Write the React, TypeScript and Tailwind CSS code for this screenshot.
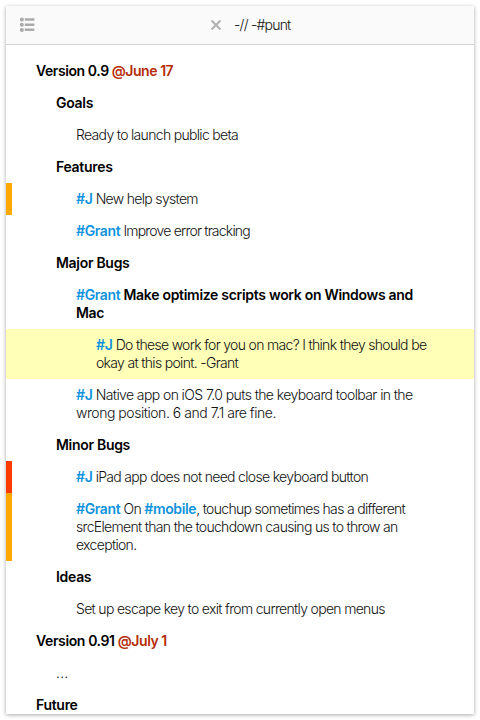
import type { ReactNode } from "react";

function Tag({ children }: { children: ReactNode }) {
  return <span className="font-['Inter'] font-semibold tracking-[-0.37px] text-[#0f93dd]">{children}</span>;
}

function When({ children }: { children: ReactNode }) {
  return <span className="tracking-[-0.45px] text-[#b52c05]">{children}</span>;
}

function Row({ className, children }: { className: string; children: ReactNode }) {
  return <li className={`border-l-6 py-[7px] ${className}`}>{children}</li>;
}

const heading = "font-semibold tracking-[-0.3px] text-black";
const plain = "border-transparent";

export default function App() {
  return (
    <div className="h-[720px] w-[480px] overflow-hidden bg-white p-[6px] font-['Inter','Liberation_Sans',sans-serif] text-[14px] leading-[18px] font-light tracking-[-0.68px] whitespace-nowrap text-[#111]">
      <div className="h-[708px] overflow-hidden bg-white shadow-[0_1px_4px_rgba(0,0,0,0.35)]">
        <header className="flex h-[39px] items-center border-b border-[#d2d2d2] bg-[#fafafa]">
          <svg className="ml-[14px] h-[16px] w-[15px] fill-[#aaa]" viewBox="0 0 15 16">
            <circle cx="1.9" cy="2.5" r="2" />
            <circle cx="1.9" cy="7.7" r="2" />
            <circle cx="1.9" cy="12.9" r="2" />
            <path d="M4.8 1.2h9.6v2.5H4.8zM4.8 6.4h9.6v2.5H4.8zM4.8 11.6h9.6v2.5H4.8z" />
          </svg>
          <svg className="ml-[176px] h-[10px] w-[10px] stroke-[#b4b4b4]" viewBox="0 0 10 10" strokeWidth="2.2">
            <path d="M.5.5l9 9M9.5.5l-9 9" />
          </svg>
          <span className="ml-[13px] tracking-[-0.78px]">-// -#punt</span>
        </header>
        <ul className="pt-[10px]">
          <Row className={`${plain} pl-[24px] ${heading}`}><span className="tracking-[-0.42px]">Version 0.9 </span><When>@June 17</When></Row>
          <Row className={`${plain} pl-[44px] ${heading}`}>Goals</Row>
          <Row className={`${plain} pl-[64px]`}>Ready to launch public beta</Row>
          <Row className={`${plain} pl-[44px] ${heading}`}>Features</Row>
          <Row className="border-[#ffa800] pl-[64px]"><Tag>#J</Tag> New help system</Row>
          <Row className={`${plain} pl-[64px] tracking-[-0.8px]`}><Tag>#Grant</Tag> Improve error tracking</Row>
          <Row className={`${plain} pl-[44px] ${heading}`}>Major Bugs</Row>
          <Row className={`${plain} pl-[64px] ${heading}`}><Tag>#Grant</Tag> Make optimize scripts work on Windows and<br />Mac</Row>
          <Row className="border-[#ffffb8] bg-[#ffffb8] pl-[84px]"><Tag>#J</Tag> Do these work for you on mac? I think they should be<br />okay at this point. -Grant</Row>
          <Row className={`${plain} pl-[64px] tracking-[-0.6px]`}><Tag>#J</Tag> Native app on iOS 7.0 puts the keyboard toolbar in the<br /><span className="tracking-[-0.46px]">wrong position. 6 and 7.1 are fine.</span></Row>
          <Row className={`${plain} pl-[44px] ${heading}`}>Minor Bugs</Row>
          <Row className="border-[#ff3b00] pl-[64px]"><Tag>#J</Tag> iPad app does not need close keyboard button</Row>
          <Row className="border-[#ffa800] pl-[64px]"><Tag>#Grant</Tag> On <Tag>#mobile</Tag>, touchup sometimes has a different<br />srcElement than the touchdown causing us to throw an<br />exception.</Row>
          <Row className={`${plain} pl-[44px] ${heading}`}>Ideas</Row>
          <Row className={`${plain} pl-[64px]`}>Set up escape key to exit from currently open menus</Row>
          <Row className={`${plain} pl-[24px] ${heading}`}><span className="tracking-[-0.38px]">Version 0.91 </span><When>@July 1</When></Row>
          <Row className={`${plain} pl-[44px]`}><span className="tracking-[0.2px]">{"."}{"."}{"."}</span></Row>
          <Row className={`${plain} pl-[24px] ${heading}`}>Future</Row>
        </ul>
      </div>
    </div>
  );
}
